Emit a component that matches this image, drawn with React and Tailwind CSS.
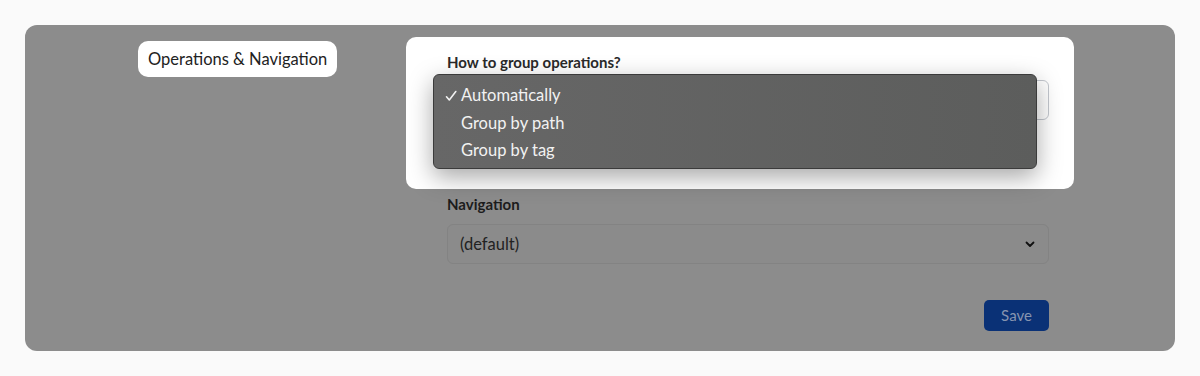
import React from 'react';

const font = { fontFamily: 'Lato, "Noto Sans", sans-serif' };

const Chevron = ({ className = '' }) => (
    <svg viewBox="0 0 12 12" className={className} fill="none" stroke="currentColor" strokeWidth="1.8" strokeLinecap="round" strokeLinejoin="round">
        <path d="M2.5 4.5 6 8l3.5-3.5" />
    </svg>
);

const Check = ({ className = '' }) => (
    <svg viewBox="0 0 12 12" className={className} fill="none" stroke="currentColor" strokeWidth="1.6" strokeLinecap="round" strokeLinejoin="round">
        <path d="M1.5 6.8 4.3 10 10.8 1.5" />
    </svg>
);

const options = ['Automatically', 'Group by path', 'Group by tag'];

const App = () => {
    return (
        <div className="h-[376px] bg-[#fafafa] p-[25px]" style={font}>
            <div className="h-[326px] rounded-[12px] bg-[#8c8c8c] flex">
                {/* left label column */}
                <div className="w-[381px] shrink-0 pt-[16px] pl-[113px]">
                    <div className="inline-flex h-[36px] items-center rounded-[10px] bg-white px-[10px] text-[16.5px] text-[#222]">
                        Operations &amp; Navigation
                    </div>
                </div>

                {/* right form column */}
                <div className="w-[668px] pt-[12px]">
                    <div className="relative h-[152px] rounded-[10px] bg-white pl-[41px] pr-[25px] pt-[16px]">
                        <div className="text-[15px] font-bold text-[#2a2a2a] leading-[19px]">How to group operations?</div>
                        <div className="mt-[8px] h-[40px] rounded-[6px] border border-[#c3c7ce] bg-white" />

                        {/* native dropdown popup */}
                        <div className="absolute left-[27px] top-[37px] w-[604px] h-[95px] rounded-[6px] border border-[#3b3b3b] bg-gradient-to-r from-[#676767] to-[#5c5d5c] shadow-[0_8px_24px_rgba(0,0,0,0.35)] pt-[7px] text-[16.5px] text-[#f2f2f2]">
                            {options.map((o, i) => (
                                <div key={o} className="flex h-[27.5px] items-center">
                                    <span className="flex w-[27px] pl-[11px]">
                                        {i === 0 && <Check className="h-[12px] w-[12px]" />}
                                    </span>
                                    <span>{o}</span>
                                </div>
                            ))}
                        </div>
                    </div>

                    <div className="pl-[41px] pr-[25px]">
                        <div className="mt-[6px] text-[15px] font-bold text-[#1c1c1c] leading-[19px]">Navigation</div>
                        <div className="mt-[10px] flex h-[40px] items-center justify-between rounded-[6px] border border-[#838383] bg-[#8b8b8b] pl-[12px] pr-[12px] text-[16.5px] text-[#222]">
                            <span>(default)</span>
                            <Chevron className="h-[12px] w-[12px] text-[#111]" />
                        </div>
                        <div className="mt-[36px] flex justify-end">
                            <button className="h-[31px] w-[65px] rounded-[5px] bg-[#0a3176] text-[15px] text-[#8794b0]">
                                Save
                            </button>
                        </div>
                    </div>
                </div>
            </div>
        </div>
    );
};

export default App;
